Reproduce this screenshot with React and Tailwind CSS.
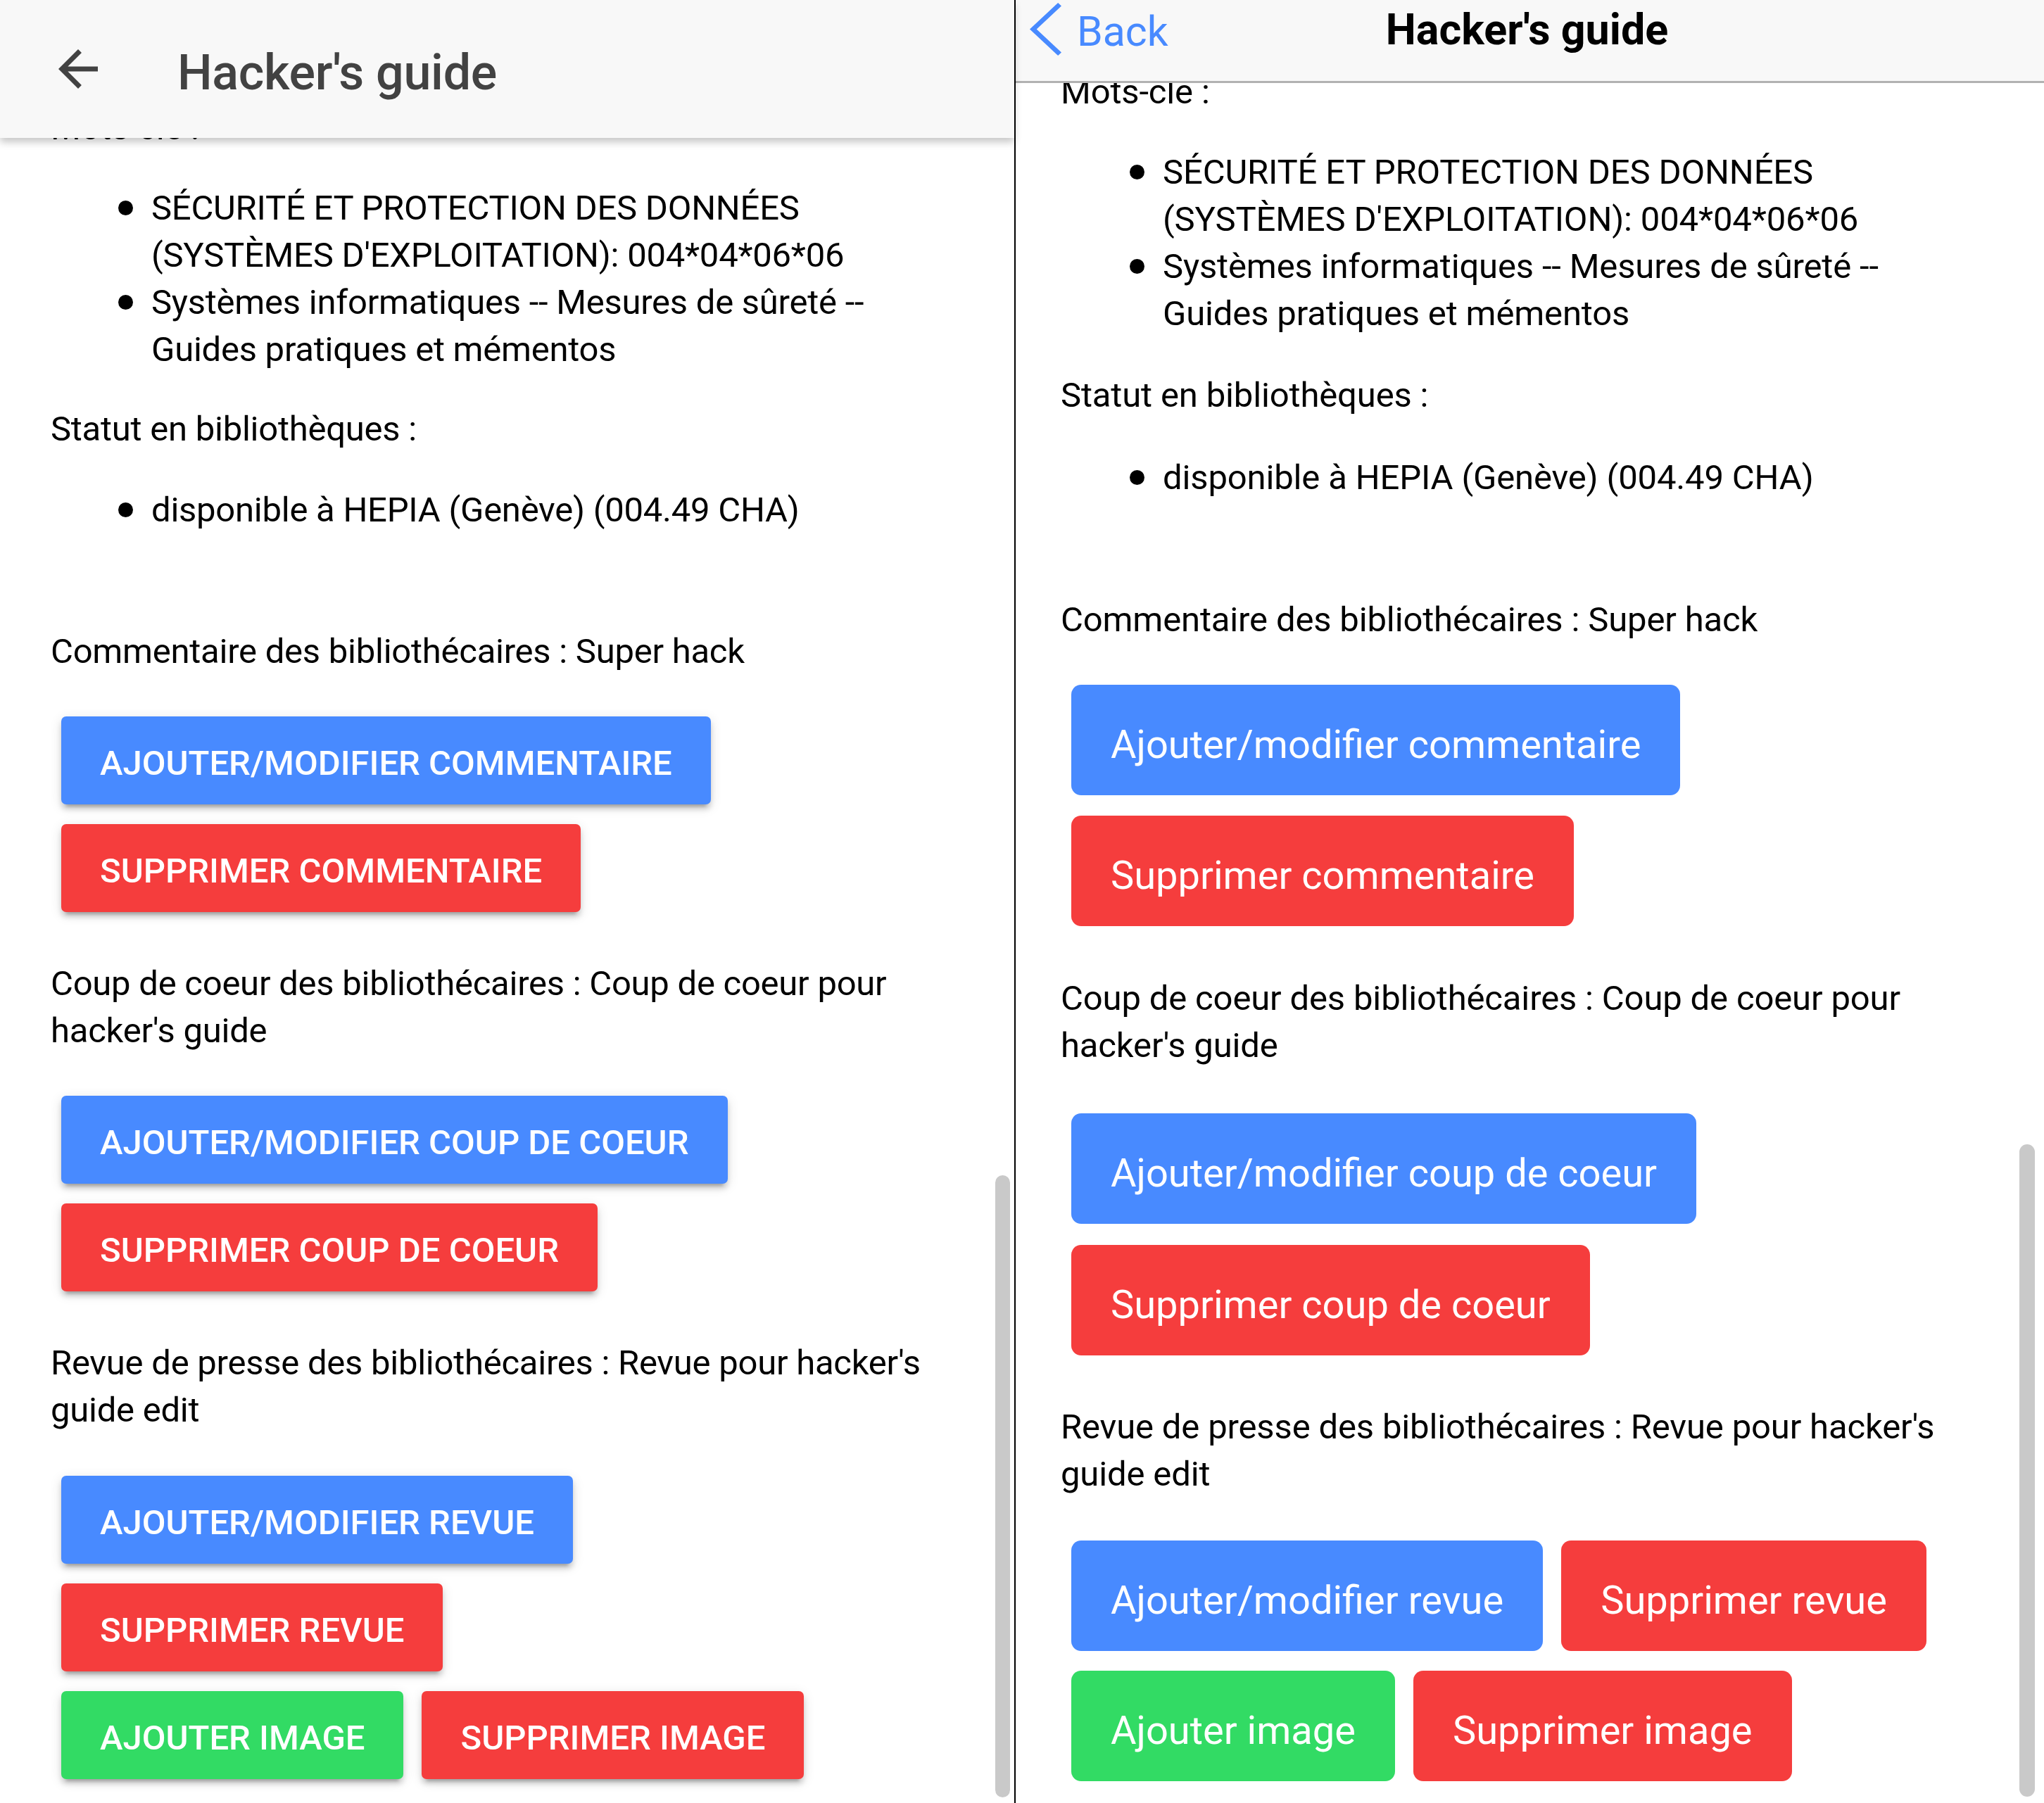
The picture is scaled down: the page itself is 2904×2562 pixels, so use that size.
import React from 'react';

const mdBtn = {
  blue: 'bg-[#488aff]',
  red: 'bg-[#f53d3d]',
  green: 'bg-[#32db64]',
};

const MdButton = ({ color, children }) => (
  <button
    className={`flex h-[125px] items-center rounded-[7px] px-[55px] pt-[8px] text-[49px] font-medium uppercase leading-none text-white shadow-[0_7px_7px_0_rgba(0,0,0,0.14),0_10px_4px_-7px_rgba(0,0,0,0.2),0_4px_17px_0_rgba(0,0,0,0.12)] ${mdBtn[color]}`}
  >
    {children}
  </button>
);

const IosButton = ({ color, children }) => (
  <button
    className={`flex h-[157px] items-center rounded-[14px] px-[56px] pt-[12px] text-[56px] leading-none text-white ${mdBtn[color]}`}
  >
    {children}
  </button>
);

const Bullets = ({ items, indent }) => (
  <ul className={indent}>
    {items.map((item) => (
      <li key={item} className="flex items-start">
        <span className="flex h-[67px] w-[47px] shrink-0 items-center">
          <span className="h-[21px] w-[21px] rounded-full bg-black" />
        </span>
        <span>{item}</span>
      </li>
    ))}
  </ul>
);

const keywords = [
  "SÉCURITÉ ET PROTECTION DES DONNÉES (SYSTÈMES D'EXPLOITATION): 004*04*06*06",
  'Systèmes informatiques -- Mesures de sûreté -- Guides pratiques et mémentos',
];
const status = ['disponible à HEPIA (Genève) (004.49 CHA)'];

const LeftPanel = () => (
  <div className="relative flex h-full w-[1441px] shrink-0 flex-col bg-white">
    {/* Material toolbar */}
    <header className="relative z-10 flex h-[196px] shrink-0 items-center bg-[#f8f8f8] shadow-[0_6px_10px_rgba(0,0,0,0.22)]">
      <svg className="ml-[69px] h-[84px] w-[84px]" viewBox="0 0 24 24" fill="#424242">
        <path d="M20 11H7.83l5.59-5.59L12 4l-8 8 8 8 1.41-1.41L7.83 13H20v-2z" />
      </svg>
      <h1 className="ml-[99px] mt-[10px] text-[70px] font-medium leading-none tracking-[-0.3px] text-[#424242]">
        Hacker's guide
      </h1>
    </header>

    <div className="flex-1 overflow-hidden pl-[72px] pr-[97px] text-[49px] leading-[67px] tracking-[-0.25px] text-black">
      <div className="-mt-[48px]">
        <p>Mots-clé :</p>
        <div className="mt-[47px]">
          <Bullets items={keywords} indent="pl-[96px]" />
        </div>
        <p className="mt-[46px]">Statut en bibliothèques :</p>
        <div className="mt-[48px]">
          <Bullets items={status} indent="pl-[96px]" />
        </div>

        <p className="mt-[134px]">Commentaire des bibliothécaires : Super hack</p>
        <div className="ml-[15px] mt-[59px] flex flex-col items-start gap-[28px] tracking-normal">
          <MdButton color="blue">Ajouter/modifier commentaire</MdButton>
          <MdButton color="red">Supprimer commentaire</MdButton>
        </div>

        <p className="mt-[68px]">Coup de coeur des bibliothécaires : Coup de coeur pour hacker's guide</p>
        <div className="ml-[15px] mt-[59px] flex flex-col items-start gap-[28px] tracking-normal">
          <MdButton color="blue">Ajouter/modifier coup de coeur</MdButton>
          <MdButton color="red">Supprimer coup de coeur</MdButton>
        </div>

        <p className="mt-[68px]">Revue de presse des bibliothécaires : Revue pour hacker's guide edit</p>
        <div className="ml-[15px] mt-[60px] flex flex-col items-start gap-[28px] tracking-normal">
          <MdButton color="blue">Ajouter/modifier revue</MdButton>
          <MdButton color="red">Supprimer revue</MdButton>
          <div className="flex gap-[26px]">
            <MdButton color="green">Ajouter image</MdButton>
            <MdButton color="red">Supprimer image</MdButton>
          </div>
        </div>
      </div>
    </div>

    {/* scrollbar */}
    <div className="absolute left-[1414px] top-[1670px] h-[884px] w-[21px] rounded-full bg-[#c9c9c9]" />
  </div>
);

const RightPanel = () => (
  <div className="relative flex h-full flex-1 flex-col bg-white">
    {/* iOS toolbar */}
    <header className="grid h-[118px] shrink-0 grid-cols-[1fr_auto_1fr] items-start border-b-[3px] border-[#b2b2b2] bg-[#f8f8f8]">
      <div className="flex items-start text-[#488aff]">
        <svg className="ml-[20px] mt-[4px] h-[75px] w-[45px]" viewBox="160 96 192 320" fill="#488aff">
          <path d="M352 115.4L331.3 96 160 256l171.3 160 20.7-19.3L201.5 256z" />
        </svg>
        <span className="ml-[22px] mt-[15px] text-[59px] leading-none">Back</span>
      </div>
      <h1 className="mr-[8px] mt-[12px] text-[61px] font-bold leading-none text-black">Hacker's guide</h1>
      <div />
    </header>

    <div className="flex-1 overflow-hidden pl-[64px] pr-[112px] text-[49px] leading-[67px] tracking-[-0.15px] text-black">
      <div className="-mt-[21px]">
        <p>Mots-clé :</p>
        <div className="mt-[47px]">
          <Bullets items={keywords} indent="pl-[98px]" />
        </div>
        <p className="mt-[49px]">Statut en bibliothèques :</p>
        <div className="mt-[50px]">
          <Bullets items={status} indent="pl-[98px]" />
        </div>

        <p className="mt-[135px]">Commentaire des bibliothécaires : Super hack</p>
        <div className="ml-[15px] mt-[59px] flex flex-col items-start gap-[29px] tracking-normal">
          <IosButton color="blue">Ajouter/modifier commentaire</IosButton>
          <IosButton color="red">Supprimer commentaire</IosButton>
        </div>

        <p className="mt-[69px]">Coup de coeur des bibliothécaires : Coup de coeur pour hacker's guide</p>
        <div className="ml-[15px] mt-[63px] flex flex-col items-start gap-[30px] tracking-normal">
          <IosButton color="blue">Ajouter/modifier coup de coeur</IosButton>
          <IosButton color="red">Supprimer coup de coeur</IosButton>
        </div>

        <p className="mt-[68px]">Revue de presse des bibliothécaires : Revue pour hacker's guide edit</p>
        <div className="ml-[15px] mt-[61px] flex max-w-[1230px] flex-wrap gap-x-[26px] gap-y-[28px] tracking-normal">
          <IosButton color="blue">Ajouter/modifier revue</IosButton>
          <IosButton color="red">Supprimer revue</IosButton>
          <IosButton color="green">Ajouter image</IosButton>
          <IosButton color="red">Supprimer image</IosButton>
        </div>
      </div>
    </div>

    <div className="absolute left-[1426px] top-[1626px] h-[927px] w-[22px] rounded-full bg-[#c9c9c9]" />
  </div>
);

export default function App() {
  return (
    <div className="flex h-[2562px] w-[2904px] overflow-hidden bg-white font-['Roboto',sans-serif]">
      <LeftPanel />
      <div className="h-full w-[2px] shrink-0 bg-black" />
      <RightPanel />
    </div>
  );
}
